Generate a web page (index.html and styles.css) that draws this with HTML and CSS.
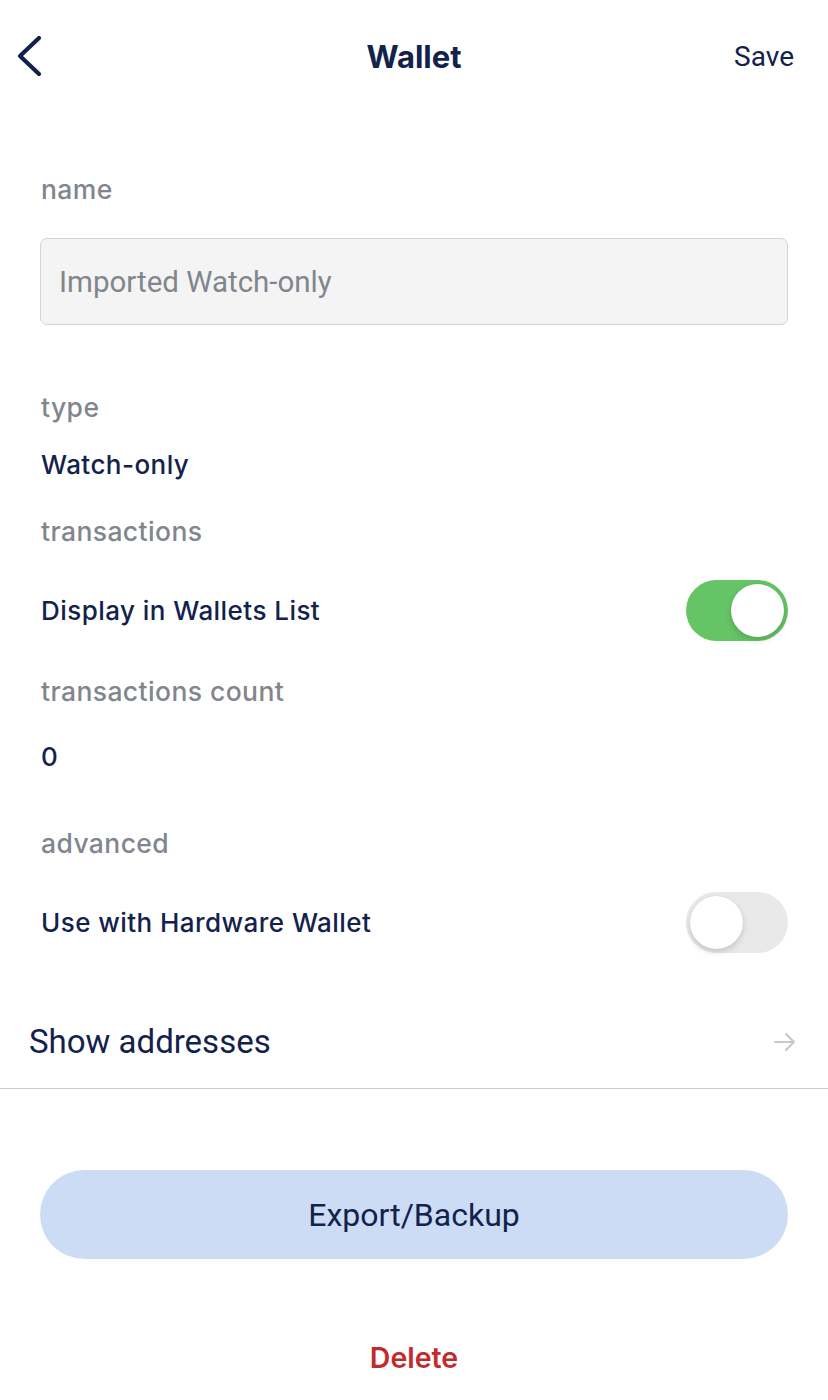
FILE: index.html
```html
<!DOCTYPE html>
<html lang="en">
<head>
<meta charset="utf-8">
<title>Wallet</title>
<link rel="stylesheet" href="styles.css">
</head>
<body>
<div class="screen">
  <header class="nav">
    <div class="nav-left">
      <svg class="back" width="28" height="42" viewBox="0 0 28 42"><path d="M24 3 L5 21 L24 39" fill="none" stroke="#13224c" stroke-width="4.2" stroke-linecap="round" stroke-linejoin="round"/></svg>
    </div>
    <div class="nav-title">Wallet</div>
    <div class="nav-right"><span class="save">Save</span></div>
  </header>

  <main class="form">
    <div class="label l-name">name</div>
    <div class="input">Imported Watch-only</div>

    <div class="label l-type">type</div>
    <div class="value v-type">Watch-only</div>

    <div class="label l-tx">transactions</div>
    <div class="row r-display">
      <span class="value">Display in Wallets List</span>
      <span class="switch on"><span class="knob"></span></span>
    </div>

    <div class="label l-count">transactions count</div>
    <div class="value v-count">0</div>

    <div class="label l-adv">advanced</div>
    <div class="row r-hw">
      <span class="value">Use with Hardware Wallet</span>
      <span class="switch off"><span class="knob"></span></span>
    </div>
  </main>

  <div class="list-item">
    <span class="list-title">Show addresses</span>
    <svg class="arrow" width="24" height="20" viewBox="0 0 24 20"><path d="M2 10 H21 M13 2 L21 10 L13 18" fill="none" stroke="#c8c8cc" stroke-width="2" stroke-linecap="round" stroke-linejoin="round"/></svg>
  </div>

  <div class="actions">
    <div class="btn">Export/Backup</div>
    <div class="delete">Delete</div>
  </div>
</div>
</body>
</html>
```

FILE: styles.css
```css
* { box-sizing: border-box; }
html, body { margin: 0; padding: 0; background: #ffffff; }
body { font-family: Inter, "Noto Sans", sans-serif; color: #13224c; }

.screen { width: 828px; min-height: 1400px; background: #fff; }

.nav {
  height: 112px;
  display: grid;
  grid-template-columns: 1fr auto 1fr;
  align-items: center;
  padding: 0 34px;
}
.nav-left { display: flex; align-items: center; height: 42px; margin-left: -19px; }
.back { display: block; }
.nav-title {
  font-family: Inter, sans-serif;
  font-weight: 700;
  font-size: 31px;
  color: #13224c;
}
.nav-right { display: flex; justify-content: flex-end; }
.save { font-family: Roboto, sans-serif; font-size: 28px; color: #13224c; }

.form { padding: 0 40px 0 41px; display: flex; flex-direction: column; }

.label { font-size: 26.5px; font-weight: 500; letter-spacing: 0.4px; line-height: 32px; color: #81868e; }
.value { font-size: 26px; font-weight: 450; letter-spacing: 0.45px; line-height: 32px; color: #13224c; }

.l-name { margin-top: 61px; }
.input {
  margin-top: 33px;
  margin-left: -1px;
  height: 87px;
  background: #f4f4f4;
  border: 1.5px solid #d3d3d3;
  border-radius: 7px;
  display: flex;
  align-items: center;
  padding-left: 18px;
  font-family: Roboto, sans-serif;
  font-size: 29.5px;
  color: #81868e;
}
.l-type { margin-top: 66px; }
.v-type { margin-top: 26px; }
.l-tx { margin-top: 34px; }
.row {
  height: 61px;
  display: flex;
  align-items: center;
  justify-content: space-between;
}
.r-display { margin-top: 33px; }
.l-count { margin-top: 34px; }
.v-count { margin-top: 34px; }
.l-adv { margin-top: 54px; }
.r-hw { margin-top: 33px; }

.switch {
  position: relative;
  width: 102px;
  height: 61px;
  border-radius: 31px;
  display: block;
}
.switch.on { background: #65c466; }
.switch.off { background: #e9e9ea; }
.knob {
  position: absolute;
  top: 4px;
  width: 53px;
  height: 53px;
  border-radius: 50%;
  background: #fff;
  box-shadow: 0 3px 6px rgba(0,0,0,0.15), 0 0 1px rgba(0,0,0,0.12);
}
.switch.on .knob { right: 4px; }
.switch.off .knob { left: 4px; }

.list-item {
  margin-top: 42px;
  height: 94px;
  border-bottom: 1.5px solid #c8c8cc;
  display: flex;
  align-items: center;
  justify-content: space-between;
  padding: 0 31px 0 29px;
}
.list-title { font-family: Roboto, sans-serif; font-size: 33px; color: #13224c; }
.arrow { display: block; }

.actions { display: flex; flex-direction: column; align-items: center; padding: 0 40px; }
.btn {
  margin-top: 81px;
  width: 100%;
  height: 89px;
  border-radius: 45px;
  background: #ccdcf5;
  display: flex;
  align-items: center;
  justify-content: center;
  font-family: Roboto, sans-serif;
  font-size: 32px;
  color: #13224c;
}
.delete {
  margin-top: 79px;
  line-height: 40px;
  font-size: 28.5px;
  font-weight: 600;
  color: #c22b2b;
}
```
